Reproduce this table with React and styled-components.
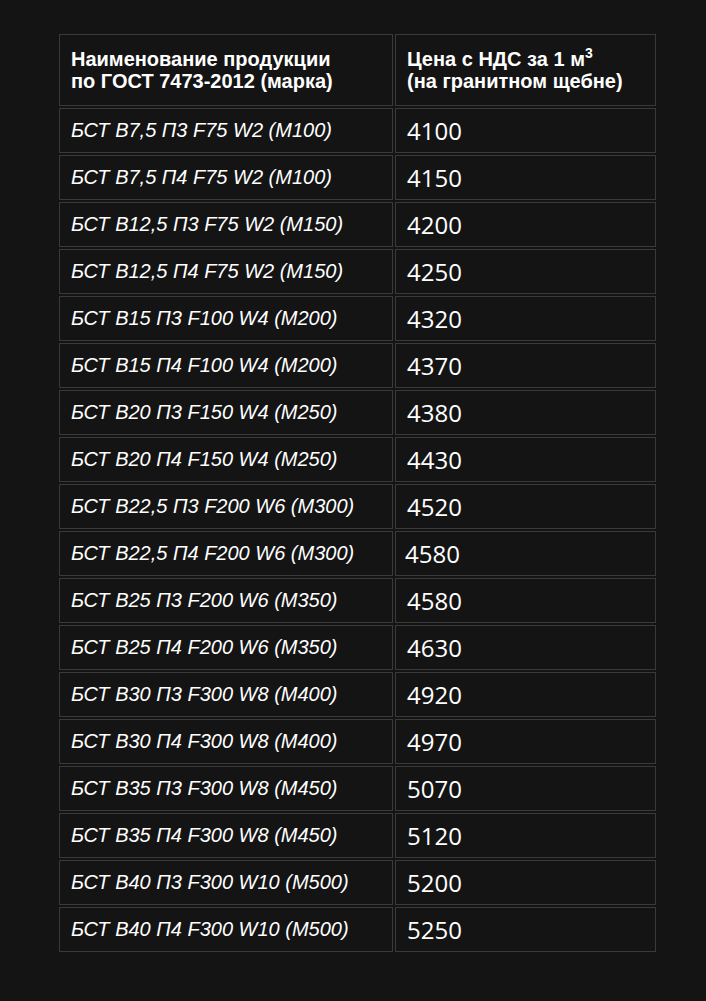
import React from 'react';
import styled, {createGlobalStyle} from 'styled-components';

const GlobalStyle = createGlobalStyle`
    html, body {
        margin: 0;
        padding: 0;
        background-color: #141414;
    }
`;

const Page = styled.div`
    min-height: 100vh;
    box-sizing: border-box;
    padding: 32px 0 0 57px;
    background-color: #141414;
`;

const PriceTable = styled.table`
    width: 601px;
    border-collapse: separate;
    border-spacing: 2px;
    table-layout: fixed;
`;

const HeadCell = styled.th`
    height: 72px;
    box-sizing: border-box;
    padding: 0 11px;
    border: 1px solid #3a3a3a;
    text-align: left;
    vertical-align: middle;
    font-family: "Liberation Sans", Arial, sans-serif;
    font-weight: bold;
    font-size: 20px;
    line-height: 22px;
    color: #ffffff;
    width: ${(props) => props.width}px;
`;

const Cell = styled.td`
    height: 45px;
    box-sizing: border-box;
    padding: 0 11px;
    border: 1px solid #3a3a3a;
    vertical-align: middle;
    color: #ffffff;
`;

const NameCell = styled(Cell)`
    font-family: "Liberation Sans", Arial, sans-serif;
    font-style: italic;
    font-size: 20px;
`;

const PriceCell = styled(Cell)`
    font-family: "Open Sans", sans-serif;
    font-size: 24px;
    padding-left: ${(props) => props.shift ? 9 : 11}px;
`;

const Sup = styled.sup`
    font-size: 14px;
    line-height: 0;
    vertical-align: 8px;
`;

const rows = [
    ['БСТ В7,5 П3 F75 W2 (М100)', '4100'],
    ['БСТ В7,5 П4 F75 W2 (М100)', '4150'],
    ['БСТ В12,5 П3 F75 W2 (М150)', '4200'],
    ['БСТ В12,5 П4 F75 W2 (М150)', '4250'],
    ['БСТ В15 П3 F100 W4 (М200)', '4320'],
    ['БСТ В15 П4 F100 W4 (М200)', '4370'],
    ['БСТ В20 П3 F150 W4 (М250)', '4380'],
    ['БСТ В20 П4 F150 W4 (М250)', '4430'],
    ['БСТ В22,5 П3 F200 W6 (М300)', '4520'],
    ['БСТ В22,5 П4 F200 W6 (М300)', '4580', true],
    ['БСТ В25 П3 F200 W6 (М350)', '4580'],
    ['БСТ В25 П4 F200 W6 (М350)', '4630'],
    ['БСТ В30 П3 F300 W8 (М400)', '4920'],
    ['БСТ В30 П4 F300 W8 (М400)', '4970'],
    ['БСТ В35 П3 F300 W8 (М450)', '5070'],
    ['БСТ В35 П4 F300 W8 (М450)', '5120'],
    ['БСТ В40 П3 F300 W10 (М500)', '5200'],
    ['БСТ В40 П4 F300 W10 (М500)', '5250'],
];

export default function App() {
    return (
        <>
            <GlobalStyle/>
            <Page>
                <PriceTable>
                    <thead>
                    <tr>
                        <HeadCell width={334}>
                            Наименование продукции<br/>по ГОСТ 7473-2012 (марка)
                        </HeadCell>
                        <HeadCell width={261}>
                            Цена с НДС за 1 м<Sup>3</Sup><br/>(на гранитном щебне)
                        </HeadCell>
                    </tr>
                    </thead>
                    <tbody>
                    {rows.map(([name, price, shift]) => (
                        <tr key={name}>
                            <NameCell>{name}</NameCell>
                            <PriceCell shift={shift}>{price}</PriceCell>
                        </tr>
                    ))}
                    </tbody>
                </PriceTable>
            </Page>
        </>
    );
}
